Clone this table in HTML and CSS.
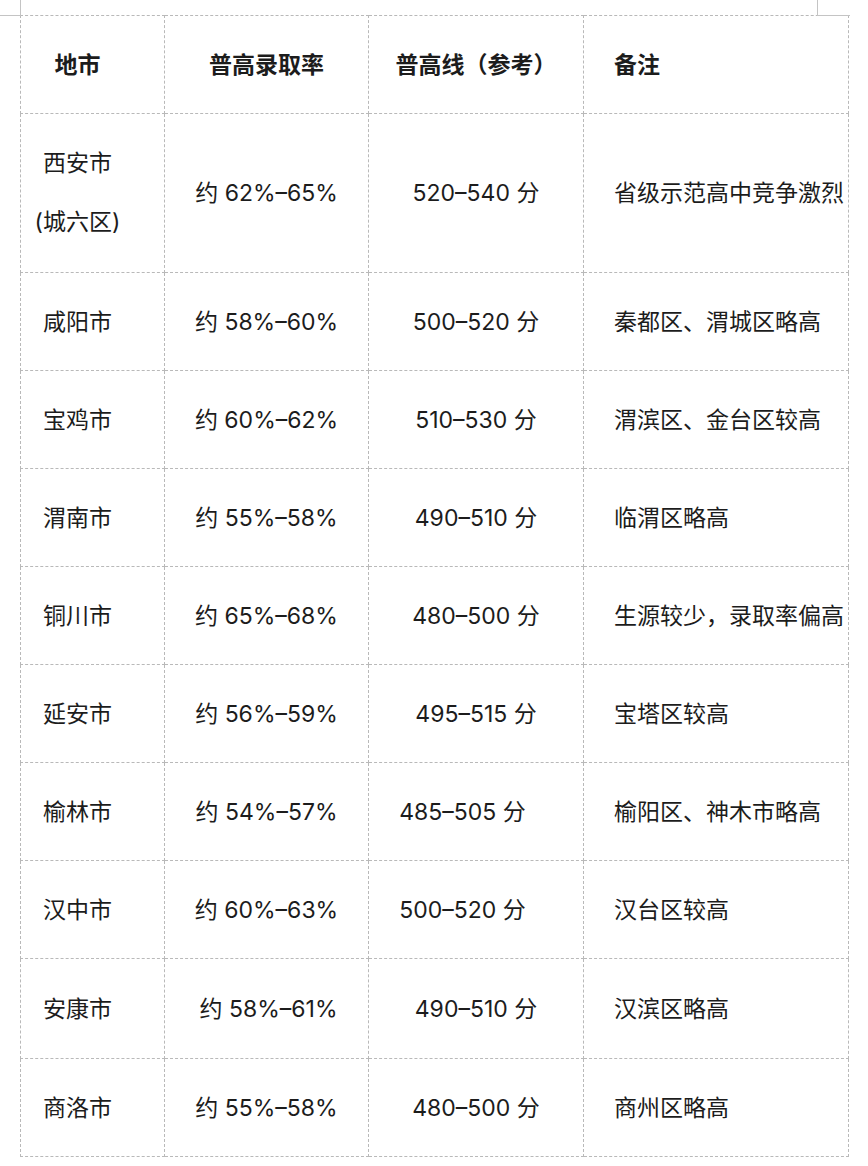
FILE: index.html
```html
<!DOCTYPE html>
<html lang="zh-CN">
<head>
<meta charset="utf-8">
<title>陕西各地市普高录取率</title>
<link rel="stylesheet" href="styles.css">
</head>
<body>
<div class="marks">
  <div class="mark-left"></div>
  <div class="mark-gap"></div>
  <div class="mark-right"></div>
</div>
<table class="grid">
  <colgroup>
    <col class="c1"><col class="c2"><col class="c3"><col class="c4">
  </colgroup>
  <thead>
    <tr class="row">
      <th class="city">地市</th>
      <th class="rate">普高录取率</th>
      <th class="line">普高线（参考）</th>
      <th class="note">备注</th>
    </tr>
  </thead>
  <tbody>
    <tr class="row tall">
      <td class="city two">西安市<br>(城六区)</td>
      <td class="rate">约 62%–65%</td>
      <td class="line">520–540 分</td>
      <td class="note">省级示范高中竞争激烈</td>
    </tr>
    <tr class="row">
      <td class="city">咸阳市</td>
      <td class="rate">约 58%–60%</td>
      <td class="line">500–520 分</td>
      <td class="note">秦都区、渭城区略高</td>
    </tr>
    <tr class="row">
      <td class="city">宝鸡市</td>
      <td class="rate">约 60%–62%</td>
      <td class="line">510–530 分</td>
      <td class="note">渭滨区、金台区较高</td>
    </tr>
    <tr class="row">
      <td class="city">渭南市</td>
      <td class="rate">约 55%–58%</td>
      <td class="line">490–510 分</td>
      <td class="note">临渭区略高</td>
    </tr>
    <tr class="row">
      <td class="city">铜川市</td>
      <td class="rate">约 65%–68%</td>
      <td class="line">480–500 分</td>
      <td class="note">生源较少，录取率偏高</td>
    </tr>
    <tr class="row">
      <td class="city">延安市</td>
      <td class="rate">约 56%–59%</td>
      <td class="line">495–515 分</td>
      <td class="note">宝塔区较高</td>
    </tr>
    <tr class="row">
      <td class="city">榆林市</td>
      <td class="rate">约 54%–57%</td>
      <td class="line shift">485–505 分</td>
      <td class="note">榆阳区、神木市略高</td>
    </tr>
    <tr class="row">
      <td class="city">汉中市</td>
      <td class="rate">约 60%–63%</td>
      <td class="line shift">500–520 分</td>
      <td class="note">汉台区较高</td>
    </tr>
    <tr class="row wide">
      <td class="city">安康市</td>
      <td class="rate nudge">约 58%–61%</td>
      <td class="line">490–510 分</td>
      <td class="note">汉滨区略高</td>
    </tr>
    <tr class="row">
      <td class="city">商洛市</td>
      <td class="rate">约 55%–58%</td>
      <td class="line">480–500 分</td>
      <td class="note">商州区略高</td>
    </tr>
  </tbody>
</table>
</body>
</html>
```
FILE: styles.css
```css
html, body {
  margin: 0;
  padding: 0;
  background: #ffffff;
}

body {
  font-family: "Inter", "Noto Sans CJK SC", sans-serif;
  font-size: 23px;
  color: #1c1c1c;
}

.marks {
  display: flex;
  height: 16px;
}

.mark-left {
  box-sizing: border-box;
  width: 21px;
  height: 16px;
  border-right: 1px solid #c4c4c4;
  border-bottom: 1px solid #c4c4c4;
}

.mark-gap {
  width: 796px;
}

.mark-right {
  box-sizing: border-box;
  width: 33px;
  height: 16px;
  border-left: 1px solid #c4c4c4;
  border-bottom: 1px solid #c4c4c4;
}

.grid {
  margin: -1px 0 0 20px;
  width: 829px;
  table-layout: fixed;
  border-collapse: collapse;
}

.c1 { width: 144px; }
.c2 { width: 204px; }
.c3 { width: 215px; }
.c4 { width: 265px; }

.grid th,
.grid td {
  border: 1px dashed #b9b9b9;
  padding: 0;
  vertical-align: middle;
  white-space: nowrap;
  line-height: 30px;
}

.grid th {
  font-weight: bold;
}

.row {
  height: 98px;
}

.row.tall {
  height: 159px;
}

.row.wide {
  height: 100px;
}

.city {
  text-align: center;
  padding-right: 30px !important;
}

.city.two {
  line-height: 59px !important;
}

.rate {
  text-align: center;
}

.rate.nudge {
  padding-left: 4px !important;
}

.line {
  text-align: center;
}

.line.shift {
  padding-right: 27px !important;
}

.note {
  text-align: left;
  padding-left: 30px !important;
}
```
